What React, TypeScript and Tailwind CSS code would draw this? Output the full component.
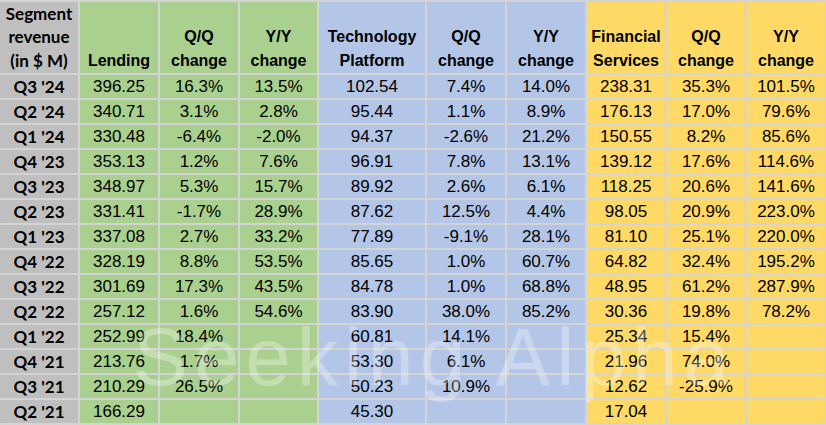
import React from 'react'

type Row = [string, string, string, string, string, string, string, string, string, string]

const rows: Row[] = [
  ["Q3 '24", '396.25', '16.3%', '13.5%', '102.54', '7.4%', '14.0%', '238.31', '35.3%', '101.5%'],
  ["Q2 '24", '340.71', '3.1%', '2.8%', '95.44', '1.1%', '8.9%', '176.13', '17.0%', '79.6%'],
  ["Q1 '24", '330.48', '-6.4%', '-2.0%', '94.37', '-2.6%', '21.2%', '150.55', '8.2%', '85.6%'],
  ["Q4 '23", '353.13', '1.2%', '7.6%', '96.91', '7.8%', '13.1%', '139.12', '17.6%', '114.6%'],
  ["Q3 '23", '348.97', '5.3%', '15.7%', '89.92', '2.6%', '6.1%', '118.25', '20.6%', '141.6%'],
  ["Q2 '23", '331.41', '-1.7%', '28.9%', '87.62', '12.5%', '4.4%', '98.05', '20.9%', '223.0%'],
  ["Q1 '23", '337.08', '2.7%', '33.2%', '77.89', '-9.1%', '28.1%', '81.10', '25.1%', '220.0%'],
  ["Q4 '22", '328.19', '8.8%', '53.5%', '85.65', '1.0%', '60.7%', '64.82', '32.4%', '195.2%'],
  ["Q3 '22", '301.69', '17.3%', '43.5%', '84.78', '1.0%', '68.8%', '48.95', '61.2%', '287.9%'],
  ["Q2 '22", '257.12', '1.6%', '54.6%', '83.90', '38.0%', '85.2%', '30.36', '19.8%', '78.2%'],
  ["Q1 '22", '252.99', '18.4%', '', '60.81', '14.1%', '', '25.34', '15.4%', ''],
  ["Q4 '21", '213.76', '1.7%', '', '53.30', '6.1%', '', '21.96', '74.0%', ''],
  ["Q3 '21", '210.29', '26.5%', '', '50.23', '10.9%', '', '12.62', '-25.9%', ''],
  ["Q2 '21", '166.29', '', '', '45.30', '', '', '17.04', '', ''],
]

const bg = [
  'bg-[#bfbfbf]',
  'bg-[#a9d08e]', 'bg-[#a9d08e]', 'bg-[#a9d08e]',
  'bg-[#b4c6e7]', 'bg-[#b4c6e7]', 'bg-[#b4c6e7]',
  'bg-[#ffd966]', 'bg-[#ffd966]', 'bg-[#ffd966]',
]

const headers: string[][] = [
  ['Segment', 'revenue', '(in $ M)'],
  ['Lending'],
  ['Q/Q', 'change'],
  ['Y/Y', 'change'],
  ['Technology', 'Platform'],
  ['Q/Q', 'change'],
  ['Y/Y', 'change'],
  ['Financial', 'Services'],
  ['Q/Q', 'change'],
  ['Y/Y', 'change'],
]

const labelFont = { fontFamily: 'Lato, "Open Sans", sans-serif' }
const bodyFont = { fontFamily: '"Liberation Sans", Arial, sans-serif' }

export default function App() {
  return (
    <div className="relative w-[826px] h-[425px] overflow-hidden bg-[#d4d4d4] text-black">
      <div className="grid grid-cols-[78px_78px_78px_77px_106px_78px_78px_78px_78px_78px] grid-rows-[71px_repeat(14,23px)] gap-[2px] pt-[2px]">
        {headers.map((lines, i) => (
          <div
            key={'h' + i}
            className={`${bg[i]} flex flex-col justify-end items-center pb-[1px] font-bold leading-[23.5px] ${i === 0 ? 'text-[17px]' : 'text-[16px]'}`}
            style={i === 0 ? labelFont : bodyFont}
          >
            {lines.map(l => (
              <span key={l} className="whitespace-nowrap">{l}</span>
            ))}
          </div>
        ))}
        {rows.map(r =>
          r.map((cell, i) => (
            <div
              key={r[0] + i}
              className={`${bg[i]} flex items-center justify-center whitespace-nowrap ${i === 0 ? 'font-bold text-[17px]' : 'text-[17px]'}`}
              style={i === 0 ? labelFont : bodyFont}
            >
              {cell}
            </div>
          ))
        )}
      </div>

      {/* watermark */}
      <div
        className="absolute left-[133px] top-[316px] text-[82px] leading-none tracking-[6px] text-white/30 whitespace-nowrap pointer-events-none select-none"
        style={bodyFont}
      >
        Seeking Alpha
      </div>
    </div>
  )
}
